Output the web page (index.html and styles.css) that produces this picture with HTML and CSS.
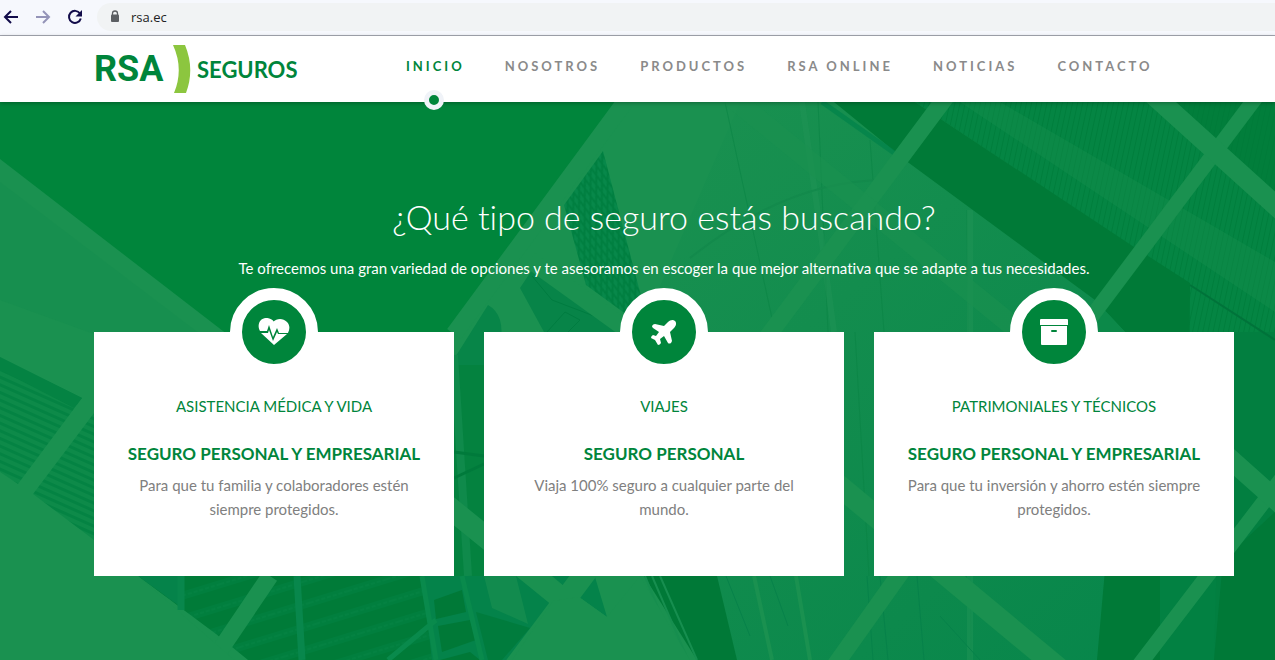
FILE: index.html
```html
<!DOCTYPE html>
<html lang="es">
<head>
    <meta charset="UTF-8">
    <meta name="viewport" content="width=device-width, initial-scale=1.0">
    <title>RSA Seguros</title>
    <link rel="stylesheet" href="styles.css">
</head>
<body>

    <!-- Barra del navegador -->
    <div class="browser-bar">
        <button class="browser-button" aria-label="Atrás">
            <svg width="16" height="16" viewBox="0 0 16 16"><path d="M15 8H2M8 2L2 8l6 6" fill="none" stroke="#120c4a" stroke-width="2"/></svg>
        </button>
        <button class="browser-button" aria-label="Adelante">
            <svg width="16" height="16" viewBox="0 0 16 16"><path d="M1 8h13M8 2l6 6-6 6" fill="none" stroke="#9494b8" stroke-width="2"/></svg>
        </button>
        <button class="browser-button" aria-label="Recargar">
            <svg width="16" height="16" viewBox="0 0 16 16"><path d="M13 4.500A6 6 0 1 0 13.800 9.500" fill="none" stroke="#120c4a" stroke-width="2"/><path d="M15 1v6.500H8.500z" fill="#120c4a"/></svg>
        </button>
        <div class="address">
            <svg width="10" height="13" viewBox="0 0 10 13"><path d="M2.500 5.500V3.500a2.500 2.500 0 0 1 5 0v2" fill="none" stroke="#5c5f63" stroke-width="1.300"/><rect x="1" y="4.500" width="8" height="7.500" rx="1" fill="#5c5f63"/></svg>
            <input class="address-input" type="text" value="rsa.ec" aria-label="Dirección">
        </div>
    </div>

    <header class="header">
        <a class="logo" href="#">
            <span class="logo-name">RSA</span>
            <svg class="logo-mark" width="18" height="48" viewBox="0 0 18 48"><path d="M0 0h12Q22 24 13 48H1Q11 24 0 0z" fill="#8cc63f"/></svg>
            <span class="logo-text">SEGUROS</span>
        </a>
        <nav class="nav">
            <a class="active" href="#">Inicio</a>
            <a href="#">Nosotros</a>
            <a href="#">Productos</a>
            <a href="#">RSA Online</a>
            <a href="#">Noticias</a>
            <a href="#">Contacto</a>
        </nav>
    </header>

    <main class="hero">
        <svg class="hero-background" viewBox="0 102 1275 558" preserveAspectRatio="xMidYMin slice" aria-hidden="true">
            <defs>
                <pattern id="roof" width="7" height="7" patternUnits="userSpaceOnUse" patternTransform="rotate(24)">
                    <rect width="7" height="7" fill="#0d8a49"/>
                    <rect width="7" height="3" fill="#048343"/>
                </pattern>
                <pattern id="blinds" width="5" height="30" patternUnits="userSpaceOnUse" patternTransform="rotate(12)">
                    <rect width="5" height="30" fill="#048543"/>
                    <rect width="1" height="30" fill="#007e3c"/>
                </pattern>
                <pattern id="floors" width="40" height="22" patternUnits="userSpaceOnUse" patternTransform="rotate(-17)">
                    <rect width="40" height="22" fill="#007b38"/>
                    <rect y="3" width="40" height="8" fill="#017f3e"/>
                    <path d="M0 7h40" stroke="#068546" stroke-dasharray="4 2"/>
                </pattern>
                <pattern id="lattice" width="6" height="18" patternUnits="userSpaceOnUse" patternTransform="rotate(-18)">
                    <rect width="6" height="18" fill="#07884a"/>
                    <path d="M0 0l3 9-3 9M6 0L3 9l3 9" fill="none" stroke="#007f40" stroke-width="2"/>
                </pattern>
                <linearGradient id="glass" x1="0" y1="0" x2="1" y2="1">
                    <stop offset="0" stop-color="#1a9150"/>
                    <stop offset="1" stop-color="#05854a"/>
                </linearGradient>
            </defs>

            <rect y="102" width="1275" height="558" fill="#1a9150"/>
            <path d="M0 102H625L400 406H320L0 159z" fill="#00853b"/>
            <path d="M0 182L200 334H94L0 300z" fill="#178f4f"/>

            <!-- Techo de la izquierda -->
            <path d="M0 357L82 398 18 484 0 472zM94 413v127L33 494z" fill="url(#roof)"/>
            <path d="M0 357l82 41-8 10-74-38z" fill="#048343"/>

            <!-- Edificio central -->
            <path d="M740 102H1275V660H715L640 332z" fill="url(#glass)"/>
            <path d="M603 151L564 205 586 285 638 323 650 330z" fill="url(#lattice)"/>
            <path d="M532 270l-12 18 24 44h78l-28-25z" fill="#078448"/>
            <path d="M547 332l18-20 15 8-12 12M532 276l20 24 42 16" fill="none" stroke="#007c40" stroke-width="1"/>
            <path d="M488 305q18 10 12 40l-16 110h-30v-96z" fill="#078548"/>
            <path d="M454 365h30v211h-30z" fill="#04823f"/>
            <path d="M454 355l14 221" fill="none" stroke="#0f8a4b" stroke-width="8"/>
            <path d="M454 452l30 4M454 478l30-14" fill="none" stroke="#007a3b" stroke-width="3"/>
            <path d="M818 102l10 230M870 140l14 192M725 102l50 230M967 210l4 450M855 332l14 244" fill="none" stroke="#0a8345" stroke-width="1" opacity=".6"/>
            <path d="M802 102l20 140 12 90M970 210v450" fill="none" stroke="#1f9455" stroke-width="6" opacity=".5"/>
            <path d="M690 258q100-80 200-78" fill="none" stroke="#138a4c" stroke-width="2"/>

            <!-- Fachada superior derecha -->
            <path d="M915 102h360v260h-88v-79z" fill="url(#blinds)"/>
            <path d="M960 102h40l275 160v50z" fill="#1a9150" opacity=".35"/>
            <path d="M1175 102h100v98z" fill="#007a37" opacity=".6"/>
            <path d="M834 102h81l219 145 56 36-3 377h-90l29-327-31-33-186-137z" fill="#007a37"/>
            <path d="M822 102l82 58" fill="none" stroke="#00824a" stroke-width="5" opacity=".7"/>
            <path d="M1095 300l31 33v243H1040z" fill="#0c8949"/>
            <path d="M1160 430h63l-9 230h-54z" fill="#028142"/>
            <path d="M1223 332h52v328h-61z" fill="#027f40"/>
            <path d="M1223 560l52-48v148h-61z" fill="#007937"/>
            <path d="M1190 285l85 55" stroke="#00733a" stroke-width="2"/>

            <!-- Edificios de abajo -->
            <path d="M138 576H540L553 601 512 660H248L216 634z" fill="url(#floors)"/>
            <path d="M138 576h42l-2 29z" fill="#05834a"/>
            <path d="M181 576v34M297 576l5 84" fill="none" stroke="#08874c" stroke-width="7"/>
            <path d="M422 576h98l33 25-41 59h-80z" fill="#04834a"/>
            <path d="M434 600l28-10 4 22-30 7zM438 626l32-6 6 20-34 12zM440 660l30-8 10 8z" fill="#007937"/>
            <path d="M484 576h32l12 48-36-16z" fill="#128b4e"/>
            <path d="M476 612l54 16-28 32h-14z" fill="#007c3d"/>
            <path d="M422 576l14 84M462 576l20 84M436 620l-48 40" fill="none" stroke="#098a4c" stroke-width="5"/>
            <path d="M552 576h24l-11 11zM579 597l16-20 12 40z" fill="#04834a"/>
            <path d="M644 576h73l20 84h-40z" fill="#007937"/>
            <path d="M645 576l34 84M652 576l36 84M660 576l37 84" fill="none" stroke="#168e4f" stroke-width="2"/>
            <path d="M754 576l18 84M796 576l14 84" fill="none" stroke="#1a9150" stroke-width="4"/>
            <path d="M726 576l24 60M770 576l18 50M867 576l6 84M880 576l8 84M917 576l7 84M940 616l40 44" fill="none" stroke="#07824a"/>

            <!-- Vigas -->
            <g fill="none" stroke="#1a9150">
                <path d="M946 97L765 340M914 554L828 675" stroke-width="17"/>
                <path d="M1260 92L1080 332M1285 474L1130 677" stroke-width="15"/>
                <path d="M1150 92L1285 214M1220 450L1285 508" stroke-width="20"/>
                <path d="M270 576L220 650M625 102L454 334" stroke-width="17"/>
                <path d="M440 500L600 630M610 540L490 700" stroke-width="22"/>
                <path d="M820 470L1075 682" stroke-width="22"/>
                <path d="M725 92L1030 340" stroke-width="20" opacity=".6"/>
                <path d="M530 260L630 332" stroke-width="17"/>
            </g>
            <path d="M138 576L248 672H0V576zM553 601L512 660H690L640 576 607 617 579 597z" fill="#1a9150"/>
        </svg>

        <section class="intro">
            <h1>¿Qué tipo de seguro estás buscando?</h1>
            <p>Te ofrecemos una gran variedad de opciones y te asesoramos en escoger la que mejor alternativa que se adapte a tus necesidades.</p>
        </section>

        <section class="cards">
            <article class="card">
                <div class="card-icon">
                    <svg width="32" height="28" viewBox="0 0 32 28" fill="#fff"><path d="M16 4C13-1 6-1 3 2 0 5 0 10 2 13h7l2-6 4 12 4-9 2 5h9c2-4 2-8-1-11-4-4-10-4-14 0z"/><path d="M3 15l13 12 13-11h-9l-1-2-4 9-4-11-1 3z"/></svg>
                </div>
                <h2>Asistencia médica y vida</h2>
                <h3>Seguro personal y empresarial</h3>
                <p>Para que tu familia y colaboradores estén siempre protegidos.</p>
            </article>
            <article class="card">
                <div class="card-icon">
                    <svg width="26" height="26" viewBox="0 0 26 26" fill="#fff"><path d="M24 2c-2-2-5-1-7 1l-4 4-9-2q-2 0-3 2 0 1 1 2l6 4-3 4-3-1q-2 1-2 3l4 2 3 5q2 0 3-2l-1-4 4-3 4 7q1 1 3 0l1-2-2-9 4-4c2-2 3-5 1-7z"/></svg>
                </div>
                <h2>Viajes</h2>
                <h3>Seguro personal</h3>
                <p>Viaja 100% seguro a cualquier parte del mundo.</p>
            </article>
            <article class="card">
                <div class="card-icon">
                    <svg width="30" height="28" viewBox="0 0 30 28"><path d="M2 1h26q1 0 1 1v5H1V2q0-1 1-1zM2 8h26v18q0 1-1 1H3q-1 0-1-1z" fill="#fff"/><rect x="12" y="12" width="6" height="2" rx="1" fill="#00853b"/></svg>
                </div>
                <h2>Patrimoniales y técnicos</h2>
                <h3>Seguro personal y empresarial</h3>
                <p>Para que tu inversión y ahorro estén siempre protegidos.</p>
            </article>
        </section>
    </main>

</body>
</html>
```

FILE: styles.css
```css
* {
    box-sizing: border-box;
}

body {
    margin: 0;
    min-height: 100vh;
    display: flex;
    flex-direction: column;
    font-family: Lato, "Open Sans", sans-serif;
    font-variant-ligatures: none;
    color: #808080;
    background: #fff;
}

a {
    text-decoration: none;
}

.browser-bar {
    display: flex;
    align-items: center;
    gap: 16px;
    height: 36px;
    padding: 0 0 2px 3px;
    background: #f6f8fd;
    border-bottom: 1px solid #a6a9b3;
}

.browser-button {
    display: flex;
    padding: 0;
    border: none;
    background: none;
}

.address {
    flex: 1;
    display: flex;
    align-items: center;
    gap: 11px;
    height: 28px;
    padding-left: 13px;
    margin-left: -2px;
    background: #f1f3f4;
    border-radius: 14px 0 0 14px;
}

.address-input {
    flex: 1;
    padding: 0;
    border: none;
    background: none;
    font: 13px "Open Sans", sans-serif;
    color: #222;
}

.header {
    position: relative;
    z-index: 1;
    display: flex;
    align-items: center;
    height: 66px;
    padding: 0 41px 0 94px;
    background: #fff;
    box-shadow: 0 1px 4px rgba(0, 0, 0, 0.3);
}

.logo {
    display: flex;
    align-items: center;
    width: 312px;
    color: #00853b;
}

.logo-name {
    width: 79px;
    font: bold 36px Roboto, sans-serif;
}

.logo-text {
    margin-left: 6px;
    font-size: 22px;
    font-weight: bold;
}

.nav {
    display: flex;
    align-self: stretch;
    gap: 40px;
}

.nav a {
    position: relative;
    display: flex;
    align-items: center;
    padding-bottom: 6px;
    font-size: 13px;
    font-weight: bold;
    letter-spacing: 3px;
    text-transform: uppercase;
    white-space: nowrap;
    color: #8a8a8a;
}

.nav .active {
    color: #00853b;
}

.nav .active::after {
    content: "";
    position: absolute;
    left: 50%;
    bottom: -8px;
    width: 20px;
    height: 20px;
    margin-left: -11px;
    border: 5px solid #f0f3f8;
    border-radius: 50%;
    box-sizing: border-box;
    background: #00853b;
}

.hero {
    position: relative;
    flex: 1;
    padding: 91px 41px 84px 94px;
    overflow: hidden;
    background: #1a9150;
    text-align: center;
}

.hero-background {
    position: absolute;
    inset: 0;
    width: 100%;
    height: 100%;
}

.intro {
    position: relative;
    color: #fff;
}

.intro h1 {
    margin: 0;
    font-size: 34px;
    font-weight: 300;
    line-height: 48px;
}

.intro p {
    margin: 15px 0 0;
    font-size: 15px;
    line-height: 24px;
}

.cards {
    position: relative;
    display: grid;
    grid-template-columns: repeat(3, 1fr);
    gap: 30px;
    margin-top: 52px;
}

.card {
    display: flex;
    flex-direction: column;
    align-items: center;
    padding: 0 30px 55px;
    background: #fff;
}

.card-icon {
    display: flex;
    align-items: center;
    justify-content: center;
    width: 88px;
    height: 88px;
    margin-top: -44px;
    border: 12px solid #fff;
    border-radius: 50%;
    background: #00853b;
}

.card h2 {
    margin: 18px 0 0;
    font-size: 15px;
    font-weight: normal;
    line-height: 24px;
    text-transform: uppercase;
    color: #00853b;
}

.card h3 {
    margin: 24px 0 0;
    font-size: 17px;
    font-weight: bold;
    line-height: 24px;
    text-transform: uppercase;
    white-space: nowrap;
    color: #00853b;
}

.card p {
    margin: 7px 0 0;
    font-size: 15px;
    line-height: 24px;
}
```
